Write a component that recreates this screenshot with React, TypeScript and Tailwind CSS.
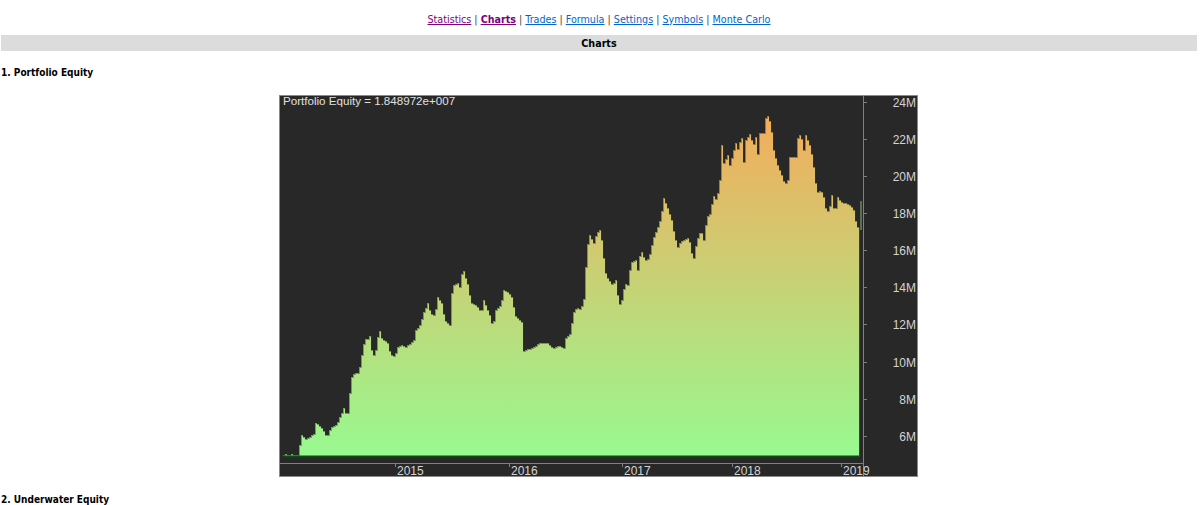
const pts: [number, number][] = [
[283,455],[285,454],[288,455],[292,454],[294,455],[298,455],[300,435],[302,435],[304,439],[310,436],[313,434],[315,423],[318,424],[320,427],[323,431],[326,437],[328,432],[331,427],[336,424],[340,415],[343,408],[346,416],[348,410],[349,393],[351,377],[354,373],[358,373],[360,360],[362,350],[364,338],[366,340],[369,336],[372,357],[375,350],[376,345],[378,328],[381,338],[387,343],[390,355],[394,356],[397,347],[402,345],[405,347],[410,343],[413,340],[415,330],[419,325],[423,312],[427,303],[430,313],[434,315],[437,297],[441,303],[444,320],[449,325],[450,297],[453,285],[458,283],[459,287],[462,268],[465,278],[468,287],[470,303],[476,305],[479,310],[482,310],[483,300],[486,307],[490,318],[492,327],[495,310],[500,305],[503,290],[508,292],[512,298],[514,315],[519,320],[521,322],[522,352],[527,349],[532,348],[538,343],[547,343],[552,348],[558,345],[563,348],[565,338],[570,333],[572,313],[576,307],[580,310],[584,295],[585,267],[588,233],[593,243],[596,233],[599,230],[602,245],[604,270],[607,278],[612,285],[615,280],[618,303],[620,305],[624,283],[627,285],[630,263],[635,260],[637,270],[640,249],[644,260],[648,258],[652,240],[657,227],[660,218],[663,198],[667,208],[671,220],[674,237],[677,247],[680,241],[688,237],[691,253],[693,258],[696,240],[700,230],[703,240],[706,217],[710,213],[712,195],[716,200],[719,180],[721,145],[723,163],[727,155],[729,165],[733,150],[736,140],[738,157],[740,126],[743,162],[745,140],[750,132],[752,147],[755,137],[756,165],[759,133],[763,133],[765,118],[767,116],[770,123],[773,150],[777,165],[782,177],[784,185],[787,180],[789,157],[795,157],[797,138],[800,133],[803,150],[805,135],[810,148],[814,173],[816,193],[820,190],[823,197],[825,208],[828,212],[831,195],[834,214],[837,197],[840,202],[845,203],[850,205],[853,210],[856,227],[859,228],
];

function buildArea() {
  let d = "M283 456";
  let i = 0;
  for (let x = 283; x < 859; x += 2) {
    while (i < pts.length - 2 && pts[i + 1][0] <= x) i++;
    const [x0, y0] = pts[i];
    const [x1, y1] = pts[i + 1];
    const y = Math.round(y0 + ((y1 - y0) * (x - x0)) / (x1 - x0));
    d += ` V${y} H${x + 2}`;
  }
  return d + " V456 Z";
}

const yTicks: [string, number][] = [["24M",102],["22M",139],["20M",176],["18M",213],["16M",250],["14M",287],["12M",324],["10M",362],["8M",399],["6M",436]];
const xTicks: [string, number][] = [["2015",395],["2016",509],["2017",622],["2018",732],["2019",841]];
const links = [
  { t: "Statistics", c: "text-[#800080]" },
  { t: "Charts", c: "text-[#800080] font-bold" },
  { t: "Trades", c: "text-[#0066cc]" },
  { t: "Formula", c: "text-[#0066cc]" },
  { t: "Settings", c: "text-[#0066cc]" },
  { t: "Symbols", c: "text-[#0066cc]" },
  { t: "Monte Carlo", c: "text-[#0066cc]" },
];

export default function App() {
  return (
    <div className="h-[505px] overflow-hidden bg-white pl-px pr-[3px] font-['DejaVu_Sans_Condensed','DejaVu_Sans',sans-serif] text-[10.67px] text-black [font-stretch:condensed]">
      <nav className="flex h-[35px] items-center justify-center pt-[4px] text-[#444]">
        {links.map((l, i) => (
          <span key={l.t} className="whitespace-pre">
            {i > 0 && " | "}
            <a href="#" className={`underline ${l.c}`}>{l.t}</a>
          </span>
        ))}
      </nav>
      <div className="flex h-4 items-center justify-center bg-[#dcdcdc] pt-[2px] font-bold">Charts</div>
      <h3 className="mt-[15px] h-[14px] text-[10px] font-bold leading-[14px]">1. Portfolio Equity</h3>
      <div className="mt-[15px] flex justify-center pr-[2px]">
        <div className="h-[382px] w-[639px] border border-[#8a8a8a] bg-[#282828]">
          <svg viewBox="280 96 637 380" width="637" height="380" className="block overflow-visible font-['Liberation_Sans',sans-serif]">
            <defs>
              <linearGradient id="eq" gradientUnits="userSpaceOnUse" x1="0" y1="116" x2="0" y2="456">
                <stop offset="0" stopColor="#f4ac5c" />
                <stop offset="1" stopColor="#98f990" />
              </linearGradient>
            </defs>
            <path d={buildArea()} fill="url(#eq)" stroke="#1f4a1c" strokeOpacity="0.45" strokeWidth="1" shapeRendering="crispEdges" />
            <line x1="861" y1="201" x2="861" y2="230" stroke="#6d8a62" strokeWidth="1.5" />
            <line x1="283" y1="456.5" x2="860" y2="456.5" stroke="#0c4d0c" strokeWidth="2" />
            <line x1="859.5" y1="228" x2="859.5" y2="457" stroke="#1d5a1d" strokeWidth="1" />
            <line x1="280" y1="463.5" x2="863" y2="463.5" stroke="#808080" />
            <line x1="863.5" y1="96" x2="863.5" y2="476" stroke="#808080" />
            {yTicks.map(([t, y]) => (
              <g key={t}>
                <line x1="864" y1={y + 0.5} x2="867" y2={y + 0.5} stroke="#808080" />
                <text x="916" y={y + 5} textAnchor="end" fontSize="12" fill="#d4d4d4">{t}</text>
              </g>
            ))}
            {xTicks.map(([t, x]) => (
              <g key={t}>
                <line x1={x + 0.5} y1="464" x2={x + 0.5} y2="467" stroke="#808080" />
                <text x={x + 2} y="475" fontSize="12" fill="#d4d4d4">{t}</text>
              </g>
            ))}
            <text x="283" y="105" fontSize="11.6" fill="#e0e0e0">Portfolio Equity = 1.848972e+007</text>
          </svg>
        </div>
      </div>
      <h3 className="mt-[16px] h-[14px] text-[10px] font-bold leading-[14px]">2. Underwater Equity</h3>
    </div>
  );
}
